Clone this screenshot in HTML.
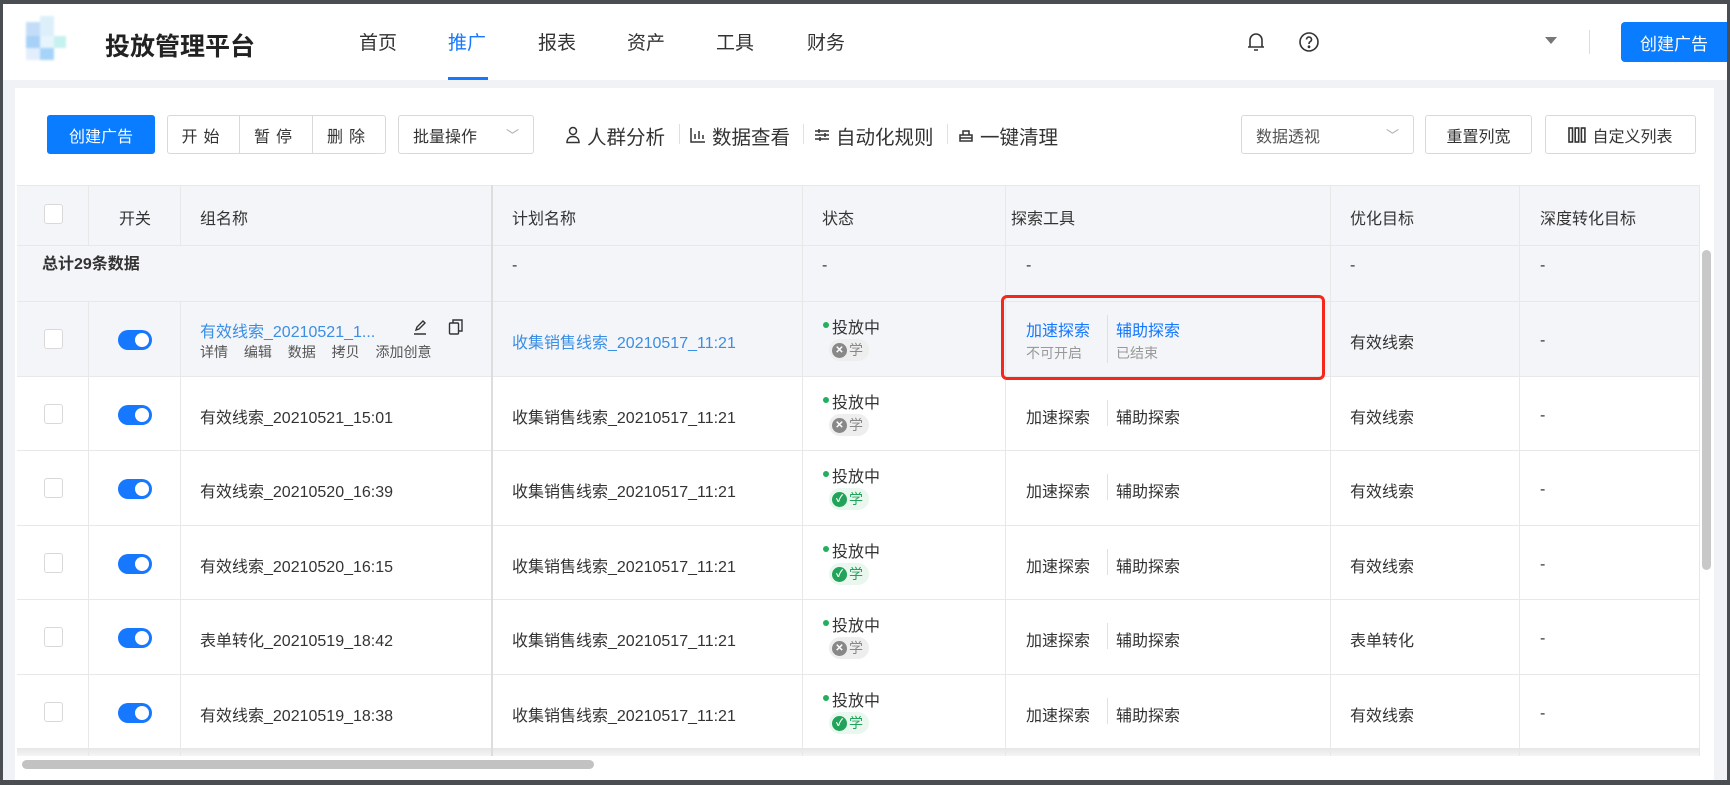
<!DOCTYPE html>
<html><head><meta charset="utf-8"><style>
*{margin:0;padding:0;box-sizing:border-box}
body{width:1730px;height:785px;background:#4a4d52;position:relative;overflow:hidden;font-family:"Liberation Sans","Noto Sans CJK SC",sans-serif;color:#333}
.a{position:absolute}
#hdr{left:3px;top:4px;width:1724px;height:76px;background:#fff}
#gray{left:3px;top:80px;width:1724px;height:700px;background:#f0f2f5}
#panel{left:15px;top:88px;width:1699px;height:692px;background:#fff}
.nav{top:28px;font-size:19px;color:#333}
.btn{border:1px solid #d9d9d9;border-radius:3px;background:#fff;font-size:16px;color:#333;display:flex;align-items:center;justify-content:center;height:39px;top:115px}
.tool{top:121px;font-size:19.5px;color:#333}
.sep{width:1px;background:#e0e0e0}
.cell{font-size:16px;color:#333}
.vl{width:1px;background:#e8e8e8}
.hl{height:1px;background:#e8e8e8;left:17px;width:1682px}
.cb{width:19px;height:20px;border:1px solid #d9d9d9;border-radius:3px;background:#fff;left:44px}
.sw{left:118px;width:34px;height:20px;border-radius:10px;background:#1677ff}
.sw:after{content:"";position:absolute;right:3px;top:3px;width:14px;height:14px;border-radius:7px;background:#fff}
.dot{width:6px;height:6px;border-radius:3px;background:#21b05c;left:823px}
.tag{left:829px;height:22px;width:40px;border-radius:11px;font-size:14px;display:flex;align-items:center;padding-left:3px;gap:2px}
.tg{background:#eee;color:#888}.tg i{background:#888}
.tk{background:#e9f7ee;color:#21a35a}.tk i{background:#21a35a}
.tag i{display:inline-block;width:15px;height:15px;border-radius:8px;color:#fff;font-style:normal;font-size:10px;text-align:center;line-height:15px;font-weight:bold}
</style></head><body>
<div class="a" id="hdr"></div>
<div class="a" id="gray"></div>
<div class="a" id="panel"></div>
<!-- logo -->
<div class="a" style="left:22px;top:14px;width:60px;height:48px;opacity:.6;filter:blur(1px)">
<div class="a" style="left:4px;top:8px;width:14px;height:14px;background:#9cc8f5"></div>
<div class="a" style="left:18px;top:2px;width:14px;height:20px;background:#c5e6f8"></div>
<div class="a" style="left:4px;top:22px;width:14px;height:12px;background:#6fb3f2"></div>
<div class="a" style="left:18px;top:22px;width:14px;height:12px;background:#d8eefa"></div>
<div class="a" style="left:32px;top:22px;width:12px;height:12px;background:#9fe8e6"></div>
<div class="a" style="left:18px;top:34px;width:14px;height:12px;background:#6ab9f5"></div>
<div class="a" style="left:4px;top:34px;width:14px;height:12px;background:#cfe4fb"></div>
</div>
<div class="a" style="left:105px;top:27px;font-size:25px;font-weight:bold;color:#222">投放管理平台</div>
<div class="a nav" style="left:359px">首页</div>
<div class="a nav" style="left:448px;color:#1677ff">推广</div>
<div class="a" style="left:448px;top:77px;width:40px;height:3px;background:#1677ff"></div>
<div class="a nav" style="left:538px">报表</div>
<div class="a nav" style="left:627px">资产</div>
<div class="a nav" style="left:716px">工具</div>
<div class="a nav" style="left:807px">财务</div>
<svg class="a" style="left:1245px;top:30px" width="22" height="24" viewBox="0 0 22 24" fill="none" stroke="#333" stroke-width="1.6"><path d="M5 17V10a6 6 0 0 1 12 0v7M3 17h16M9 20h4"/></svg>
<svg class="a" style="left:1298px;top:31px" width="22" height="22" viewBox="0 0 22 22" fill="none" stroke="#333" stroke-width="1.6"><circle cx="11" cy="11" r="9"/><path d="M8.5 8.5a2.5 2.5 0 1 1 3.5 2.3c-.7.4-1 .9-1 1.7v.5"/><circle cx="11" cy="15.8" r=".6" fill="#333"/></svg>
<div class="a" style="left:1545px;top:37px;border-left:6px solid transparent;border-right:6px solid transparent;border-top:7px solid #777"></div>
<div class="a" style="left:1589px;top:30px;width:1px;height:24px;background:#ddd"></div>
<div class="a" style="left:1621px;top:22px;width:106px;height:40px;background:#0a7cff;border-radius:4px 0 0 4px;color:#fff;font-size:17px;display:flex;align-items:center;justify-content:center">创建广告</div>
<!-- toolbar -->
<div class="a btn" style="left:47px;width:108px;background:#0a7cff;border-color:#0a7cff;color:#fff">创建广告</div>
<div class="a btn" style="left:167px;width:73px;letter-spacing:6px;border-radius:3px 0 0 3px">开始</div>
<div class="a btn" style="left:239px;width:74px;letter-spacing:6px;border-radius:0">暂停</div>
<div class="a btn" style="left:312px;width:74px;letter-spacing:6px;border-radius:0 3px 3px 0">删除</div>
<div class="a btn" style="left:398px;width:136px;justify-content:space-between;padding:0 14px">批量操作<span style="color:#aaa;font-size:13px">﹀</span></div>
<svg class="a" style="left:565px;top:126px" width="16" height="18" viewBox="0 0 16 18" fill="none" stroke="#333" stroke-width="1.5"><circle cx="8" cy="5" r="3.5"/><path d="M2 16.5c0-4 2.5-6 6-6s6 2 6 6z"/></svg>
<div class="a tool" style="left:587px">人群分析</div>
<div class="a sep" style="left:679px;top:124px;height:20px"></div>
<svg class="a" style="left:690px;top:127px" width="16" height="16" viewBox="0 0 16 16" fill="none" stroke="#333" stroke-width="1.5"><path d="M1 1v14h14M5 12V7M9 12V4M13 12V8"/></svg>
<div class="a tool" style="left:712px">数据查看</div>
<div class="a sep" style="left:803px;top:124px;height:20px"></div>
<svg class="a" style="left:814px;top:127px" width="16" height="16" viewBox="0 0 16 16" fill="none" stroke="#333" stroke-width="1.5"><path d="M1 4h14M1 8h14M1 12h14M5 2v4M11 6v4M6 10v4"/></svg>
<div class="a tool" style="left:836px">自动化规则</div>
<div class="a sep" style="left:947px;top:124px;height:20px"></div>
<svg class="a" style="left:958px;top:127px" width="16" height="16" viewBox="0 0 16 16" fill="none" stroke="#333" stroke-width="1.5"><path d="M2 8h12v6H2zM5 8V4h6v4M2 11h12"/></svg>
<div class="a tool" style="left:980px">一键清理</div>
<div class="a btn" style="left:1241px;width:173px;justify-content:space-between;padding:0 14px;color:#555">数据透视<span style="color:#aaa;font-size:13px">﹀</span></div>
<div class="a btn" style="left:1425px;width:107px">重置列宽</div>
<div class="a btn" style="left:1545px;width:151px"><svg width="18" height="16" viewBox="0 0 18 16" fill="none" stroke="#333" stroke-width="1.6" style="margin-right:6px"><rect x="1" y="1" width="3.5" height="14"/><rect x="7.2" y="1" width="3.5" height="14"/><rect x="13.4" y="1" width="3.5" height="14"/></svg>自定义列表</div>
<!-- table bg -->
<div class="a" style="left:17px;top:185px;width:1682px;height:116px;background:#f3f5f8"></div>
<div class="a" style="left:17px;top:301px;width:1682px;height:75px;background:#f3f5f8"></div>
<div class="a hl" style="top:185px"></div>
<div class="a hl" style="top:245px"></div>
<div class="a hl" style="top:301px"></div>
<div class="a hl" style="top:376px"></div>
<div class="a hl" style="top:450px"></div>
<div class="a hl" style="top:525px"></div>
<div class="a hl" style="top:599px"></div>
<div class="a hl" style="top:674px"></div>
<div class="a hl" style="top:748px;height:8px;background:linear-gradient(#e6e6e6,#f5f5f5)"></div>
<div class="a vl" style="left:88px;top:185px;height:60px"></div>
<div class="a vl" style="left:180px;top:185px;height:60px"></div>
<div class="a vl" style="left:88px;top:301px;height:455px"></div>
<div class="a vl" style="left:180px;top:301px;height:455px"></div>
<div class="a vl" style="left:491px;top:185px;height:571px;width:2px;background:#ddd"></div>
<div class="a vl" style="left:802px;top:185px;height:571px"></div>
<div class="a vl" style="left:1005px;top:185px;height:571px"></div>
<div class="a vl" style="left:1330px;top:185px;height:571px"></div>
<div class="a vl" style="left:1519px;top:185px;height:571px"></div>
<div class="a vl" style="left:1699px;top:185px;height:571px"></div>
<!-- header text -->
<div class="a cb" style="top:204px"></div>
<div class="a cell" style="left:119px;top:205px">开关</div>
<div class="a cell" style="left:200px;top:205px">组名称</div>
<div class="a cell" style="left:512px;top:205px">计划名称</div>
<div class="a cell" style="left:822px;top:205px">状态</div>
<div class="a cell" style="left:1011px;top:205px">探索工具</div>
<div class="a cell" style="left:1350px;top:205px">优化目标</div>
<div class="a cell" style="left:1540px;top:205px">深度转化目标</div>
<div class="a cell" style="left:42px;top:250px;font-weight:bold">总计29条数据</div>
<div class="a cell" style="left:512px;top:257px">-</div>
<div class="a cell" style="left:822px;top:257px">-</div>
<div class="a cell" style="left:1026px;top:257px">-</div>
<div class="a cell" style="left:1350px;top:257px">-</div>
<div class="a cell" style="left:1540px;top:257px">-</div>
<!-- scrollbars -->
<div class="a" style="left:1702px;top:250px;width:9px;height:320px;border-radius:5px;background:#c8c8c8"></div>
<div class="a" style="left:22px;top:760px;width:572px;height:9px;border-radius:5px;background:#c2c2c2"></div>
<!-- row1 -->
<div class="a cb" style="top:329px"></div>
<div class="a sw" style="top:330px"></div>
<div class="a cell" style="left:200px;top:318px;color:#3a8ee6">有效线索_20210521_1...</div>
<svg class="a" style="left:412px;top:319px" width="16" height="16" viewBox="0 0 16 16" fill="none" stroke="#333" stroke-width="1.4"><path d="M4 11l1-3 6-6 2 2-6 6zM2 15h12"/></svg>
<svg class="a" style="left:448px;top:318px" width="16" height="18" viewBox="0 0 16 18" fill="none" stroke="#333" stroke-width="1.4"><rect x="1.5" y="5" width="9" height="11" rx="1"/><path d="M5 5V2h9v11h-3.5"/></svg>
<div class="a" style="left:200px;top:342px;font-size:14px;color:#555;word-spacing:12px">详情 编辑 数据 拷贝 添加创意</div>
<div class="a cell" style="left:512px;top:329px;color:#3a8ee6">收集销售线索_20210517_11:21</div>
<div class="a cell" style="left:1350px;top:329px">有效线索</div>
<div class="a cell" style="left:1540px;top:332px">-</div>
<div class="a cell" style="left:1026px;top:317px;color:#1677ff">加速探索</div>
<div class="a cell" style="left:1116px;top:317px;color:#1677ff">辅助探索</div>
<div class="a" style="left:1026px;top:343px;font-size:14px;color:#999">不可开启</div>
<div class="a" style="left:1116px;top:343px;font-size:14px;color:#999">已结束</div>
<div class="a sep" style="left:1107px;top:315px;height:48px"></div>
<div class="a" style="left:1001px;top:295px;width:324px;height:85px;border:3px solid #f5271b;border-radius:6px"></div>
<!-- status rows -->
<div id="rows"></div>
<script>
var rows=[
[301,"有效线索_20210521_1...","x",true],
[376,"有效线索_20210521_15:01","x"],
[450,"有效线索_20210520_16:39","v"],
[525,"有效线索_20210520_16:15","v"],
[599,"表单转化_20210519_18:42","x","表单转化"],
[674,"有效线索_20210519_18:38","v"]];
var h="";
rows.forEach(function(r,i){
var t=r[0];
h+='<div class="a dot" style="top:'+(t+21)+'px"></div><div class="a cell" style="left:832px;top:'+(t+13)+'px">投放中</div>';
h+='<div class="a tag '+(r[2]=="x"?"tg":"tk")+'" style="top:'+(t+38)+'px"><i>'+(r[2]=="x"?"✕":"✓")+'</i>学</div>';
if(i>0){
h+='<div class="a cb" style="top:'+(t+28)+'px"></div><div class="a sw" style="top:'+(t+29)+'px"></div>';
h+='<div class="a cell" style="left:200px;top:'+(t+28)+'px">'+r[1]+'</div>';
h+='<div class="a cell" style="left:512px;top:'+(t+28)+'px">收集销售线索_20210517_11:21</div>';
h+='<div class="a cell" style="left:1026px;top:'+(t+28)+'px">加速探索</div><div class="a sep" style="left:1107px;top:'+(t+24)+'px;height:26px"></div><div class="a cell" style="left:1116px;top:'+(t+28)+'px">辅助探索</div>';
h+='<div class="a cell" style="left:1350px;top:'+(t+28)+'px">'+(r[3]||"有效线索")+'</div><div class="a cell" style="left:1540px;top:'+(t+31)+'px">-</div>';
}
});
document.getElementById("rows").innerHTML=h;
</script>
</body></html>
